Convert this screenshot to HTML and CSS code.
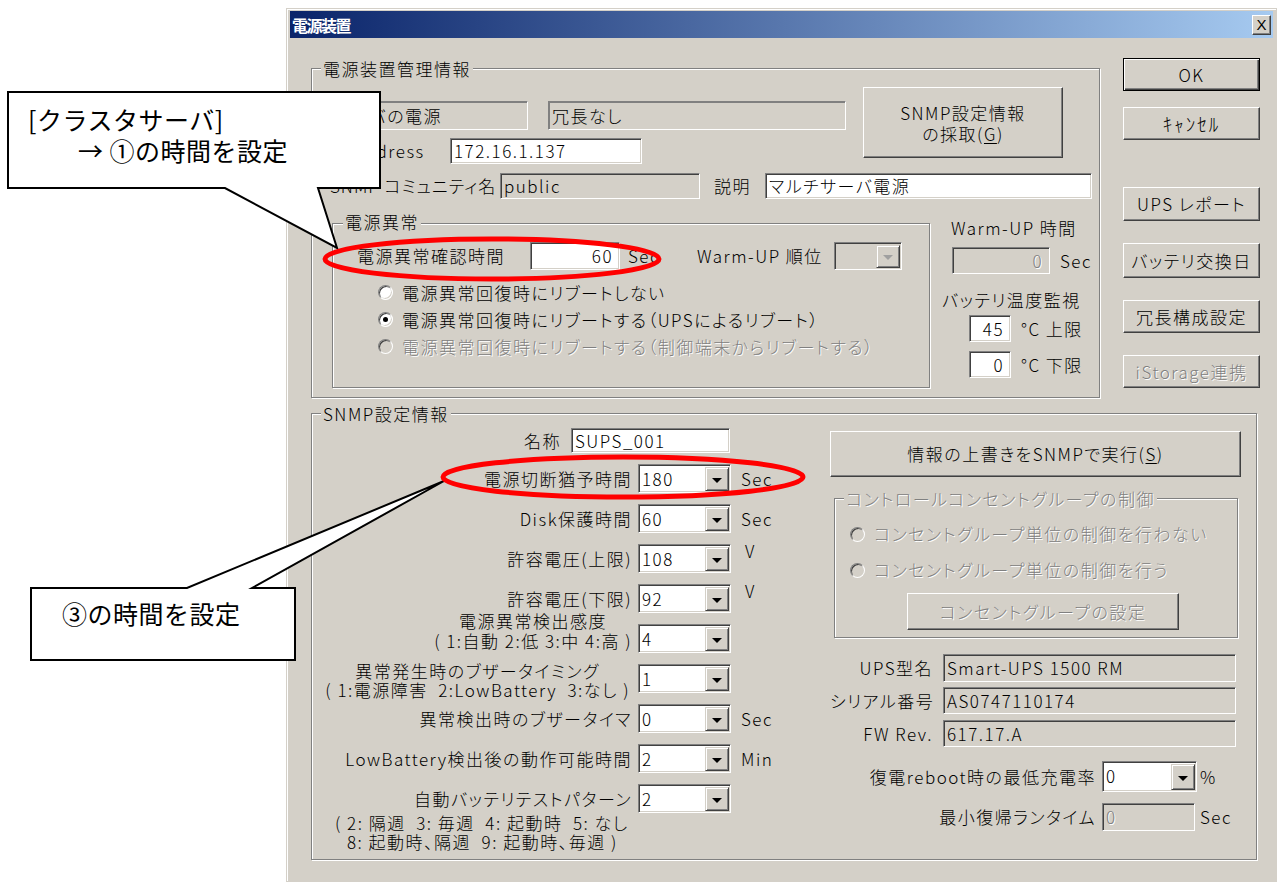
FILE: index.html
```html
<!DOCTYPE html>
<html lang="ja">
<head>
<meta charset="utf-8">
<title>電源装置</title>
<link rel="stylesheet" href="styles.css">
</head>
<body>
<div class="dialog">
  <div class="titlebar"><span class="title">電源装置</span><span class="close">X</span></div>
  <div class="client">
    <div class="toprow">
      <div class="group g-info">
        <span class="legend">電源装置管理情報</span>
        <div class="info-top">
          <div class="info-left">
            <div class="r-a">
              <div class="static w198">サーバの電源</div>
              <div class="static w298">冗長なし</div>
            </div>
            <div class="r-b">
              <span class="lbl w120">IP Address</span>
              <div class="field w192">172.16.1.137</div>
            </div>
          </div>
          <div class="btn snmp-get"><span>SNMP設定情報<br>の採取(<u>G</u>)</span></div>
        </div>
        <div class="r-c">
          <span class="lbl w170">SNMP コミュニティ名</span>
          <div class="field ro w200">public</div>
          <span class="lbl desc">説明</span>
          <div class="field w327">マルチサーバ電源</div>
        </div>
        <div class="info-bottom">
          <div class="group g-fail">
            <span class="legend">電源異常</span>
            <div class="f-row">
              <span class="lbl w173">電源異常確認時間</span>
              <div class="field num w90">60</div>
              <span class="lbl w69 ml8">Sec</span>
              <span class="lbl w137">Warm-UP 順位</span>
              <div class="combo dis w68"><span class="val"></span><span class="drop"><i></i></span></div>
            </div>
            <div class="radios">
              <div class="radio-row"><span class="radio"></span><span>電源異常回復時にリブートしない</span></div>
              <div class="radio-row"><span class="radio on"></span><span>電源異常回復時にリブートする（UPSによるリブート）</span></div>
              <div class="radio-row disabled"><span class="radio"></span><span>電源異常回復時にリブートする（制御端末からリブートする）</span></div>
            </div>
          </div>
          <div class="warm">
            <div class="w-title">Warm-UP 時間</div>
            <div class="w-row1"><div class="field ro num dtext w98">0</div><span class="lbl ml10">Sec</span></div>
            <div class="w-title2">バッテリ温度監視</div>
            <div class="w-row2"><div class="field num w42">45</div><span class="lbl ml10">°C 上限</span></div>
            <div class="w-row3"><div class="field num w42">0</div><span class="lbl ml10">°C 下限</span></div>
          </div>
        </div>
      </div>
      <div class="btncol">
        <div class="btn def">OK</div>
        <div class="btn b2"><span class="hw">ｷｬﾝｾﾙ</span></div>
        <div class="btn b3">UPS レポート</div>
        <div class="btn b4">バッテリ交換日</div>
        <div class="btn b5">冗長構成設定</div>
        <div class="btn b6 disabled">iStorage連携</div>
      </div>
    </div>

    <div class="group g-snmp">
      <span class="legend">SNMP設定情報</span>
      <div class="s-left">
        <div class="s-name"><span class="s-nlbl">名称</span><div class="field w159">SUPS_001</div></div>
        <div class="s-row"><span class="s-lbl">電源切断猶予時間</span><div class="combo"><span class="val">180</span><span class="drop"><i></i></span></div><span class="unit">Sec</span></div>
        <div class="s-row"><span class="s-lbl">Disk保護時間</span><div class="combo"><span class="val">60</span><span class="drop"><i></i></span></div><span class="unit">Sec</span></div>
        <div class="s-row"><span class="s-lbl">許容電圧(上限)</span><div class="combo"><span class="val">108</span><span class="drop"><i></i></span></div><span class="unit up">V</span></div>
        <div class="s-row"><span class="s-lbl">許容電圧(下限)</span><div class="combo"><span class="val">92</span><span class="drop"><i></i></span></div><span class="unit up">V</span></div>
        <div class="s-row"><span class="s-lbl two t1"><span>電源異常検出感度<br>( 1:自動 2:低 3:中 4:高 )</span></span><div class="combo"><span class="val">4</span><span class="drop"><i></i></span></div></div>
        <div class="s-row"><span class="s-lbl two t2"><span>異常発生時のブザータイミング<br>( 1:電源障害&nbsp; 2:LowBattery&nbsp; 3:なし )</span></span><div class="combo"><span class="val">1</span><span class="drop"><i></i></span></div></div>
        <div class="s-row"><span class="s-lbl">異常検出時のブザータイマ</span><div class="combo"><span class="val">0</span><span class="drop"><i></i></span></div><span class="unit">Sec</span></div>
        <div class="s-row"><span class="s-lbl">LowBattery検出後の動作可能時間</span><div class="combo"><span class="val">2</span><span class="drop"><i></i></span></div><span class="unit">Min</span></div>
        <div class="s-row"><span class="s-lbl"><span class="autotest">自動バッテリテストパターン</span></span><div class="combo"><span class="val">2</span><span class="drop"><i></i></span></div></div>
        <div class="notes">
          <div>( 2: 隔週&nbsp; 3: 毎週&nbsp; 4: 起動時&nbsp; 5: なし</div>
          <div class="n2">8: 起動時、隔週&nbsp; 9: 起動時、毎週 )</div>
        </div>
      </div>
      <div class="s-right">
        <div class="btn x-btn"><span>情報の上書きをSNMPで実行(<u>S</u>)</span></div>
        <div class="group g-ctrl">
          <span class="legend disabled-text">コントロールコンセントグループの制御</span>
          <div class="c-radio c1r disabled"><span class="radio"></span><span>コンセントグループ単位の制御を行わない</span></div>
          <div class="c-radio c2r disabled"><span class="radio"></span><span>コンセントグループ単位の制御を行う</span></div>
          <div class="btn c-btn disabled">コンセントグループの設定</div>
        </div>
        <div class="i-row i1"><span class="i-lbl">UPS型名</span><div class="field ro w293">Smart-UPS 1500 RM</div></div>
        <div class="i-row i2"><span class="i-lbl">シリアル番号</span><div class="field ro w293">AS0747110174</div></div>
        <div class="i-row i3"><span class="i-lbl">FW Rev.</span><div class="field ro w293">617.17.A</div></div>
        <div class="i-row i4"><span class="i-lbl2">復電reboot時の最低充電率</span><div class="combo w95"><span class="val">0</span><span class="drop"><i></i></span></div><span class="lbl ml3">%</span></div>
        <div class="i-row i5"><span class="i-lbl2">最小復帰ランタイム</span><div class="field ro dtext w93">0</div><span class="lbl ml5">Sec</span></div>
      </div>
    </div>
  </div>
</div>

<svg class="overlay" width="1277" height="882" viewBox="0 0 1277 882">
  <polygon points="8,92 380,92 380,188 318,188 337,248 225,188 8,188" fill="#fff" stroke="#000" stroke-width="2"/>
  <polygon points="31,588 187,588 444,481 252,588 295,588 295,660 31,660" fill="#fff" stroke="#000" stroke-width="2"/>
  <ellipse cx="492" cy="259" rx="167" ry="20" fill="none" stroke="#ff0000" stroke-width="5"/>
  <ellipse cx="623" cy="477" rx="180" ry="20" fill="none" stroke="#ff0000" stroke-width="5"/>
</svg>
<div class="callout-text ct1">[クラスタサーバ]<br><span class="ind">→ ①の時間を設定</span></div>
<div class="callout-text ct2">③の時間を設定</div>
</body>
</html>
```

FILE: styles.css
```css
* { box-sizing: border-box; }

body {
  margin: 0;
  width: 1277px;
  height: 882px;
  overflow: hidden;
  position: relative;
  background: #fff;
  color: #000;
  font-family: "Noto Sans CJK JP", sans-serif;
  font-size: 17px;
  font-weight: 300;
  line-height: 20px;
  letter-spacing: 1.5px;
  font-feature-settings: "palt" 1;
}

u { text-decoration: underline; text-underline-offset: 2px; }

/* window */
.dialog {
  margin: 8px 0 0 286px;
  width: 991px;
  height: 874px;
  background: #d4d0c8;
  border: 1px solid #d4d0c8;
  box-shadow: inset 1px 1px #fff;
  padding: 2px 3px 0 3px;
}

.titlebar {
  height: 27px;
  background: linear-gradient(to right, #0a246a, #a6caf0);
  display: flex;
  align-items: center;
  justify-content: space-between;
  padding: 0 2px 0 2px;
}
.title {
  color: #fff;
  font-weight: bold;
  font-size: 16px;
  letter-spacing: -1.5px;
}
.close {
  width: 19px;
  height: 20px;
  background: #d4d0c8;
  border: 1px solid;
  border-color: #fff #404040 #404040 #fff;
  box-shadow: inset -1px -1px #808080;
  display: flex;
  align-items: center;
  justify-content: center;
  font-family: "Liberation Sans", sans-serif;
  font-weight: 400;
  font-size: 15px;
  letter-spacing: 0;
}

.client { padding: 20px 0 0 21px; }
.toprow { display: flex; align-items: flex-start; }

/* generic controls */
.group {
  position: relative;
  border: 1px solid #808080;
  box-shadow: inset 1px 1px #fff, 1px 1px #fff;
}
.legend {
  position: absolute;
  top: -10px;
  left: 9px;
  padding: 0 2px;
  background: #d4d0c8;
  white-space: nowrap;
}
.lbl { white-space: nowrap; flex: none; }

.field, .static {
  flex: none;
  display: flex;
  align-items: center;
  white-space: nowrap;
  overflow: hidden;
  padding: 0 3px;
  border: 1px solid;
  border-color: #808080 #fff #fff #808080;
  box-shadow: inset 1px 1px #404040, inset -1px -1px #d4d0c8;
  background: #fff;
}
.static {
  background: #d4d0c8;
  box-shadow: inset 1px 1px #808080;
  height: 29px;
}
.field.ro { background: #d4d0c8; }
.field.num { justify-content: flex-end; padding-right: 6px; }
.dtext, .disabled, .disabled-text {
  color: #808080;
  text-shadow: 1px 1px 0 #fff;
}

.btn {
  flex: none;
  display: flex;
  align-items: center;
  justify-content: center;
  text-align: center;
  white-space: nowrap;
  background: #d4d0c8;
  border: 1px solid;
  border-color: #fff #404040 #404040 #fff;
  box-shadow: inset -1px -1px #808080;
}
.btn.def {
  border: 1px solid #000;
  box-shadow: inset 1px 1px #fff, inset -1px -1px #404040, inset -2px -2px #808080;
}
.hw { font-size: 19px; letter-spacing: 2px; }

.combo {
  flex: none;
  display: flex;
  width: 93px;
  height: 29px;
  background: #fff;
  border: 1px solid;
  border-color: #808080 #fff #fff #808080;
  box-shadow: inset 1px 1px #404040, inset -1px -1px #d4d0c8;
  padding: 2px 1px 1px 2px;
}
.combo .val { flex: 1; line-height: 24px; padding-left: 1px; white-space: nowrap; }
.combo .drop {
  width: 24px;
  flex: none;
  display: flex;
  align-items: center;
  justify-content: center;
  background: #d4d0c8;
  border: 1px solid;
  border-color: #d4d0c8 #404040 #404040 #d4d0c8;
  box-shadow: inset 1px 1px #fff, inset -1px -1px #808080;
}
.combo .drop i {
  display: block;
  width: 0;
  height: 0;
  margin-top: 2px;
  border-left: 5px solid transparent;
  border-right: 5px solid transparent;
  border-top: 5px solid #000;
}
.combo.dis { background: #d4d0c8; }
.combo.dis .drop i { border-top-color: #a0a0a0; }

.radio {
  position: relative;
  flex: none;
  width: 15px;
  height: 15px;
  border-radius: 50%;
  background: #fff;
  border: 1px solid;
  border-color: #808080 #fff #fff #808080;
  box-shadow: inset 1px 1px #404040, inset -1px -1px #d4d0c8;
}
.radio.on::after {
  content: "";
  position: absolute;
  left: 4px;
  top: 4px;
  width: 5px;
  height: 5px;
  border-radius: 50%;
  background: #000;
}
.disabled .radio { background: #d4d0c8; }

/* widths */
.w42 { width: 42px; }
.w68 { width: 68px; }
.w69 { width: 69px; }
.w90 { width: 90px; }
.w93 { width: 93px; }
.w95 { width: 95px; }
.w98 { width: 98px; }
.w120 { width: 120px; }
.w137 { width: 137px; }
.w159 { width: 159px; }
.w170 { width: 170px; letter-spacing: 1px; }
.w173 { width: 173px; }
.w192 { width: 192px; }
.w198 { width: 198px; }
.w200 { width: 200px; }
.w293 { width: 293px; }
.w298 { width: 298px; }
.w327 { width: 327px; }
.ml3 { margin-left: 3px; }
.ml5 { margin-left: 5px; }
.ml8 { margin-left: 8px; }
.ml10 { margin-left: 10px; }

/* info group */
.g-info {
  width: 789px;
  height: 330px;
  margin-top: 10px;
  padding-left: 18px;
}
.info-top { display: flex; margin-top: 18px; height: 71px; }
.info-left { width: 516px; }
.r-a { display: flex; gap: 20px; margin-top: 14px; height: 29px; }
.r-b { display: flex; align-items: center; margin-top: 8px; height: 26px; }
.r-b .field { height: 26px; }
.snmp-get { margin-left: 17px; width: 200px; height: 71px; line-height: 21px; }
.r-c { display: flex; align-items: center; margin-top: 15px; height: 26px; }
.r-c .field { height: 26px; }
.desc { margin-left: 14px; width: 51px; }

.info-bottom { display: flex; align-items: flex-start; }
.g-fail {
  margin-left: 2px;
  margin-top: 24px;
  width: 598px;
  height: 165px;
}
.g-fail .legend { left: 10px; top: -12px; }
.f-row {
  display: flex;
  align-items: center;
  margin-top: 18px;
  height: 28px;
  padding-left: 24px;
}
.f-row .field, .f-row .combo { height: 28px; }
.radios { margin-top: 9px; padding-left: 45px; }
.radio-row {
  display: flex;
  align-items: center;
  gap: 9px;
  height: 27px;
  white-space: nowrap;
}

.warm { margin-left: 12px; width: 150px; }
.w-title { margin-top: 19px; height: 20px; padding-left: 9px; white-space: nowrap; }
.w-row1 { display: flex; align-items: center; margin-top: 9px; height: 27px; padding-left: 10px; }
.w-row1 .field { height: 27px; }
.w-title2 { margin-top: 16px; height: 20px; white-space: nowrap; }
.w-row2, .w-row3 { display: flex; align-items: center; height: 27px; padding-left: 27px; }
.w-row2 { margin-top: 5px; }
.w-row3 { margin-top: 9px; }
.w-row2 .field, .w-row3 .field { height: 27px; }

/* right buttons */
.btncol { display: flex; flex-direction: column; margin-left: 23px; width: 137px; }
.btncol .btn { width: 137px; height: 33px; }
.btncol .b2 { margin-top: 16px; }
.btncol .b3 { margin-top: 47px; height: 34px; }
.btncol .b4 { margin-top: 22px; height: 35px; }
.btncol .b5 { margin-top: 22px; }
.btncol .b6 { margin-top: 22px; }

/* SNMP group */
.g-snmp {
  display: flex;
  margin-top: 15px;
  width: 946px;
  height: 447px;
}
.s-left { width: 518px; flex: none; }
.s-name { display: flex; align-items: center; margin-top: 14px; height: 25px; }
.s-nlbl { width: 249px; text-align: right; white-space: nowrap; }
.s-name .field { margin-left: 10px; height: 25px; }
.s-row { display: flex; align-items: center; margin-top: 11px; height: 29px; }
.s-lbl {
  width: 320px;
  flex: none;
  display: flex;
  justify-content: flex-end;
  text-align: center;
  white-space: nowrap;
}
.s-row .combo { margin-left: 6px; }
.unit { margin-left: 10px; white-space: nowrap; }
.unit.up { align-self: flex-start; margin-left: 14px; margin-top: -3px; }
.s-lbl.two.t1 { align-self: flex-start; margin-top: -13px; line-height: 20px; }
.s-lbl.two.t2 { align-self: flex-start; margin-top: -3px; line-height: 19px; }
.s-lbl.two.t2 > span { margin-right: 2px; }
.notes { margin-top: 0; padding-left: 23px; line-height: 19px; white-space: nowrap; }
.notes .n2 { padding-left: 12px; }

.s-right { width: 411px; flex: none; }
.x-btn { margin-top: 17px; width: 411px; height: 46px; }
.g-ctrl {
  margin-left: 4px;
  margin-top: 21px;
  width: 404px;
  height: 140px;
}
.g-ctrl .legend { left: 9px; }
.c-radio {
  display: flex;
  align-items: center;
  gap: 9px;
  height: 20px;
  padding-left: 15px;
  white-space: nowrap;
}
.c1r { margin-top: 25px; }
.c2r { margin-top: 16px; }
.c-btn { margin-top: 13px; margin-left: 72px; width: 272px; height: 37px; }

.i-row { display: flex; align-items: center; }
.i-row .field, .i-row .combo { height: 100%; }
.i-lbl { width: 103px; margin-right: 10px; text-align: right; white-space: nowrap; flex: none; }
.i-lbl2 { width: 266px; margin-right: 6px; text-align: right; white-space: nowrap; flex: none; }
.i1 { margin-top: 16px; height: 28px; }
.i2 { margin-top: 5px; height: 27px; }
.i3 { margin-top: 6px; height: 27px; }
.i4 { margin-top: 14px; height: 31px; }
.i5 { margin-top: 11px; height: 28px; }

/* annotation overlay */
.overlay {
  position: absolute;
  left: 0;
  top: 0;
  pointer-events: none;
}
.callout-text {
  position: absolute;
  font-size: 25px;
  font-weight: 400;
  line-height: 31px;
  letter-spacing: 0.5px;
  font-feature-settings: normal;
  white-space: nowrap;
}
.ct1 { left: 28px; top: 104px; }
.ct1 .ind { padding-left: 50px; }
.ct2 { left: 62px; top: 598px; }
```
